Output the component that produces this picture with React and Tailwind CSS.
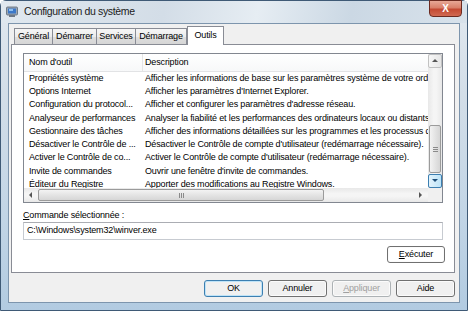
const rows = [
  ["Propriétés système", "Afficher les informations de base sur les paramètres système de votre ordinateur."],
  ["Options Internet", "Afficher les paramètres d'Internet Explorer."],
  ["Configuration du protocol...", "Afficher et configurer les paramètres d'adresse réseau."],
  ["Analyseur de performances", "Analyser la fiabilité et les performances des ordinateurs locaux ou distants."],
  ["Gestionnaire des tâches", "Afficher des informations détaillées sur les programmes et les processus qui s'exécutent."],
  ["Désactiver le Contrôle de ...", "Désactiver le Contrôle de compte d'utilisateur (redémarrage nécessaire)."],
  ["Activer le Contrôle de co...", "Activer le Contrôle de compte d'utilisateur (redémarrage nécessaire)."],
  ["Invite de commandes", "Ouvrir une fenêtre d'invite de commandes."],
  ["Éditeur du Registre", "Apporter des modifications au Registre Windows."],
];

const tabs = [
  { label: "Général", cls: "w-[39px]" },
  { label: "Démarrer", cls: "w-[45px]" },
  { label: "Services", cls: "w-[40px]" },
  { label: "Démarrage", cls: "w-[52px]" },
];

function Arrow({ dir, color = "#3b3b3b" }) {
  const pts = {
    up: "1,5 4,2 7,5",
    down: "1,2 4,5 7,2",
    left: "5,1 2,4 5,7",
    right: "2,1 5,4 2,7",
  };
  return (
    <svg width="8" height="8" viewBox="0 0 8 8">
      <polygon points={pts[dir]} fill={color} />
    </svg>
  );
}

function VistaButton({ children, isDefault, disabled, className }) {
  return (
    <div
      className={
        "flex items-center justify-center rounded-[3px] border " +
        (isDefault
          ? "border-[#3c7fb1] shadow-[inset_0_0_0_1px_#bfe3f7] "
          : "border-[#707070] shadow-[inset_0_0_0_1px_#fbfbfb] ") +
        "bg-[linear-gradient(to_bottom,#f4f4f4_0%,#ebebeb_48%,#dddddd_52%,#cfcfcf_100%) " +
        (disabled ? "text-[#a0a0a0] border-[#adb2b5] " : "text-black ") +
        className
      }
    >
      {children}
    </div>
  );
}

export default function App() {
  return (
    <div className="w-[468px] h-[311px] overflow-hidden font-['Liberation_Sans',Arial,sans-serif] text-[9px] tracking-[-0.15px] text-black">
      <div className="w-full h-full flex flex-col rounded-t-[6px] border border-[#3f5a76] bg-[linear-gradient(to_bottom,#e2e9f0_0%,#d3dee8_30%,#c2d5e6_70%,#b2cbe1_100%)]">
        {/* Title bar */}
        <div className="relative h-[22px] flex items-center pl-[5px] shrink-0 bg-[linear-gradient(100deg,#e0e8ef_0%,#d3dde7_35%,#e6edf3_55%,#cbd8e4_75%,#d8e2eb_100%)]">
          <svg width="12" height="12" viewBox="0 0 12 12" className="shrink-0">
            <rect x="0.5" y="1" width="11" height="8" rx="1" fill="#9aa7b5" stroke="#5b6776" strokeWidth="0.8" />
            <rect x="2" y="2.5" width="8" height="5" fill="#3c78c8" />
            <rect x="3" y="3" width="4" height="2" fill="#8fc0f0" />
            <rect x="3" y="9" width="6" height="2" fill="#6d7886" />
          </svg>
          <span className="ml-[6px] text-[10.5px] tracking-[-0.35px] text-[#1b1b1b]">Configuration du système</span>
          <div className="absolute right-[5px] top-[-1px] w-[33px] h-[17px] rounded-b-[4px] border border-[#6b2a20] bg-[linear-gradient(to_bottom,#e8a896_0%,#d9806a_45%,#c44a33_55%,#d06a52_100%)] flex items-center justify-center">
            <span className="text-white font-bold text-[10px] leading-none">X</span>
          </div>
        </div>

        {/* Client area */}
        <div className="mx-[7px] h-[280px] shrink-0 border border-[#7d95ad] bg-[#f0f0f0] flex flex-col">
          {/* Tabs */}
          <div className="mt-[2px] h-[18px] flex items-end pl-[5px] shrink-0">
            {tabs.map((t) => (
              <div
                key={t.label}
                className={
                  "h-[16px] -mr-px flex items-center justify-center border border-b-0 border-[#898c95] bg-[linear-gradient(to_bottom,#f6f6f6_0%,#ececec_50%,#dedede_51%,#d6d6d6_100%)] " +
                  t.cls
                }
              >
                {t.label}
              </div>
            ))}
            <div className="relative z-10 -mb-px ml-[1px] h-[19px] w-[37px] flex items-center justify-center border border-b-0 border-[#898c95] bg-white pb-[1px]">
              Outils
            </div>
          </div>

          {/* Tab panel */}
          <div className="ml-[2px] mr-[4px] h-[229px] border border-[#898c95] bg-white flex flex-col">
            {/* List view */}
            <div className="mt-[8px] ml-[11px] w-[420px] h-[150px] border border-[#828790] flex flex-col shrink-0 overflow-hidden">
              <div className="flex h-[134px]">
                <div className="flex-1 overflow-hidden">
                  <div className="h-[18px] flex items-center border-b border-[#e2e3e5] bg-[linear-gradient(to_bottom,#ffffff,#f7f8f9)]">
                    <div className="w-[119px] pl-[5px] border-r border-[#e5e5e5] h-full flex items-center">Nom d'outil</div>
                    <div className="pl-[2px] whitespace-nowrap">Description</div>
                  </div>
                  {rows.map(([name, desc]) => (
                    <div key={name} className="h-[13.25px] flex items-center whitespace-nowrap">
                      <div className="w-[119px] pl-[5px] shrink-0 overflow-hidden">{name}</div>
                      <div className="pl-[2px] shrink-0">{desc}</div>
                    </div>
                  ))}
                </div>
                {/* Vertical scrollbar */}
                <div className="w-[14px] shrink-0 flex flex-col bg-[linear-gradient(to_right,#e8e8e8,#f5f5f5_40%,#f5f5f5_60%,#e8e8e8)]">
                  <div className="h-[14px] flex items-center justify-center border border-[#c2c2c2] rounded-[2px] bg-[linear-gradient(to_right,#f7f7f7,#e6e6e6)]">
                    <Arrow dir="up" color="#555" />
                  </div>
                  <div className="h-[57px]" />
                  <div className="h-[48px] mx-px rounded-[2px] border border-[#9b9b9b] bg-[linear-gradient(to_right,#f3f3f3,#e4e4e4_50%,#d6d6d6)] flex flex-col items-center justify-center gap-[1px]">
                    <div className="w-[5px] h-px bg-[#8a8a8a]" />
                    <div className="w-[5px] h-px bg-[#8a8a8a]" />
                    <div className="w-[5px] h-px bg-[#8a8a8a]" />
                  </div>
                  <div className="flex-1" />
                  <div className="h-[14px] flex items-center justify-center border border-[#3c7fb1] rounded-[2px] bg-[linear-gradient(to_right,#e3f3fc,#bde4f8)]">
                    <Arrow dir="down" color="#1f4e79" />
                  </div>
                </div>
              </div>
              {/* Horizontal scrollbar */}
              <div className="h-[14px] flex shrink-0">
                <div className="flex-1 flex bg-[linear-gradient(to_bottom,#e8e8e8,#f5f5f5_40%,#f5f5f5_60%,#e8e8e8)]">
                  <div className="w-[14px] flex items-center justify-center">
                    <Arrow dir="left" color="#555" />
                  </div>
                  <div className="w-[286px] my-px rounded-[2px] border border-[#9b9b9b] bg-[linear-gradient(to_bottom,#f3f3f3,#e4e4e4_50%,#d6d6d6)] flex items-center justify-center gap-[1px]">
                    <div className="w-px h-[5px] bg-[#8a8a8a]" />
                    <div className="w-px h-[5px] bg-[#8a8a8a]" />
                    <div className="w-px h-[5px] bg-[#8a8a8a]" />
                  </div>
                  <div className="flex-1" />
                  <div className="w-[14px] flex items-center justify-center">
                    <Arrow dir="right" color="#555" />
                  </div>
                </div>
                <div className="w-[14px] bg-[#f0f0f0]" />
              </div>
            </div>

            {/* Command */}
            <div className="mt-[6px] ml-[11px] h-[12px] leading-[12px]">
              <span className="underline">C</span>ommande sélectionnée :
            </div>
            <div className="mt-[1px] ml-[11px] w-[420px] h-[18px] border border-[#c7cbd1] border-t-[#abadb3] flex items-center pl-[3px]">
              C:\Windows\system32\winver.exe
            </div>
            <div className="mt-[6px] flex justify-end pr-[9px]">
              <VistaButton className="w-[58px] h-[17px]">
                <span className="underline">E</span>xécuter
              </VistaButton>
            </div>
          </div>

          {/* Bottom buttons */}
          <div className="mt-[7px] flex justify-end gap-[5px] pr-[4px]">
            <VistaButton isDefault className="w-[59px] h-[17px]">OK</VistaButton>
            <VistaButton className="w-[59px] h-[17px]">Annuler</VistaButton>
            <VistaButton disabled className="w-[59px] h-[17px]">
              <span className="underline">A</span>ppliquer
            </VistaButton>
            <VistaButton className="w-[59px] h-[17px]">Aide</VistaButton>
          </div>
        </div>
      </div>
    </div>
  );
}
